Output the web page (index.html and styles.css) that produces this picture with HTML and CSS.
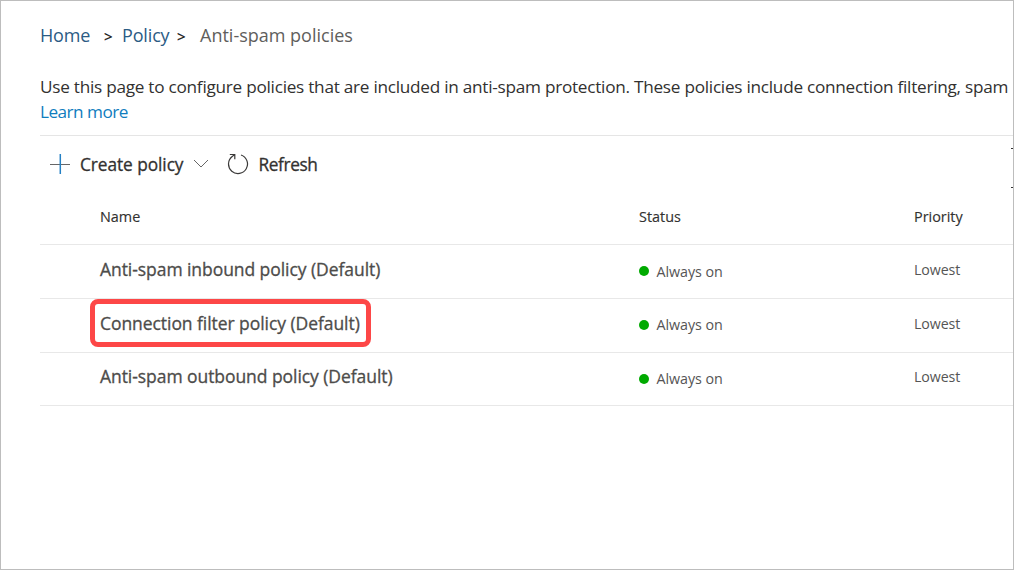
FILE: index.html
```
<!DOCTYPE html>
<html lang="en">
<head>
<meta charset="utf-8">
<title>Anti-spam policies</title>
<link rel="stylesheet" href="styles.css">
</head>
<body>
<main class="page">
  <nav class="breadcrumb"><a class="home">Home</a><span class="sep sep-1">&gt;</span><a class="policy">Policy</a><span class="sep sep-2">&gt;</span><span class="current">Anti-spam policies</span></nav>
  <section class="intro">
    <p class="description">Use this page to configure policies that are included in anti-spam protection. These policies include connection filtering, spam</p>
    <a class="learn">Learn more</a>
  </section>
  <div class="toolbar">
    <svg class="plus" viewBox="0 0 20 20"><path class="plus-h" d="M0 10.5H20"/><path class="plus-v" d="M10.3 0V20"/></svg>
    <span class="command create">Create policy</span>
    <svg class="chevron" viewBox="0 0 16 9"><path d="M1 1L8 8L15 1"/></svg>
    <svg class="refresh-icon" viewBox="0 0 22 22"><path d="M14 2A9.5 9.5 0 1 1 5.2 3.5L7.6 1.6M2.8 1.5H7.8V6.2"/></svg>
    <span class="command refresh">Refresh</span>
    <div class="search"></div>
  </div>
  <div class="table">
    <div class="row head"><span class="th">Name</span><span class="th">Status</span><span class="th">Priority</span></div>
    <div class="row"><span class="name">Anti-spam inbound policy (Default)</span><span class="status"><i class="dot"></i><span>Always on</span></span><span class="priority">Lowest</span></div>
    <div class="row"><span class="name">Connection filter policy (Default)<i class="highlight"></i></span><span class="status raised"><i class="dot"></i><span>Always on</span></span><span class="priority">Lowest</span></div>
    <div class="row last"><span class="name">Anti-spam outbound policy (Default)</span><span class="status raised"><i class="dot"></i><span>Always on</span></span><span class="priority">Lowest</span></div>
  </div>
</main>
</body>
</html>
```
FILE: styles.css
```
* { box-sizing: border-box; }
body { margin: 0; background: #fff; }
.page {
  height: 570px;
  padding-left: 39px;
  border: 1px solid #bdbdbd;
  overflow: hidden;
  font-family: "Open Sans", "Noto Sans", sans-serif;
  color: #323130;
}
.breadcrumb { display: flex; height: 51px; padding-top: 22px; font-size: 18px; line-height: 25px; color: #605e5c; }
.breadcrumb a { color: #2b5b84; }
.home { width: 64px; letter-spacing: -0.2px; }
.policy { width: 55px; letter-spacing: -0.15px; }
.sep { padding-top: 1px; font-size: 15px; color: #111; -webkit-text-stroke: 0.2px; }
.sep-1 { width: 18px; }
.sep-2 { width: 23px; }
.intro { height: 83px; padding-top: 22px; font-size: 17.2px; line-height: 25px; }
.description { margin: 0; white-space: nowrap; letter-spacing: -0.26px; }
.learn { color: #0f7dbe; letter-spacing: -0.52px; }
.toolbar { display: flex; height: 55px; padding: 18px 0 0 10px; border-top: 1px solid #e5e5e5; }
.toolbar svg { fill: none; stroke: #3b3a39; stroke-width: 1.2; }
.plus { width: 20px; height: 20px; }
.toolbar .plus-h { stroke: #666; stroke-width: 1; }
.toolbar .plus-v { stroke: #2480c4; stroke-width: 1.5; }
.command { font-size: 17.3px; line-height: 21px; -webkit-text-stroke: 0.3px; }
.create { width: 113px; margin-left: 10px; letter-spacing: -0.06px; }
.toolbar .chevron { width: 16px; height: 9px; margin-top: 5px; stroke-width: 0.9; stroke: #555; }
.refresh-icon { width: 22px; height: 22px; margin: -1px 9px 0 18px; }
.refresh { margin-left: 0.5px; letter-spacing: -0.4px; }
.search { width: 2px; height: 40px; margin: -6px 0 0 auto; border: solid #333; border-width: 1px 0; }
.row { display: grid; grid-template-columns: 539px 275px 1fr; height: 54px; padding-left: 60px; border-bottom: 1px solid #e8e8e8; }
.head { height: 55px; padding-top: 17px; font-size: 14.4px; line-height: 20px; -webkit-text-stroke: 0.15px; }
.name { position: relative; padding-top: 12px; font-size: 17.5px; line-height: 24px; letter-spacing: -0.06px; color: #4d4c4a; -webkit-text-stroke: 0.3px; }
.highlight { position: absolute; left: -10px; top: 0; width: 281px; height: 48px; border: 5px solid #fd4747; border-radius: 8px; }
.status { display: flex; align-items: center; height: 52px; font-size: 14.3px; letter-spacing: -0.05px; color: #555; }
.raised span { margin-top: -2px; }
.dot { width: 10px; height: 10px; margin-right: 7.5px; border-radius: 50%; background: #0a0; }
.priority { padding-top: 15px; font-size: 14.2px; line-height: 20px; letter-spacing: -0.1px; color: #555; }
.last { height: 53px; }
.last .name { padding-top: 11px; }
.last .priority { padding-top: 14px; }
```
